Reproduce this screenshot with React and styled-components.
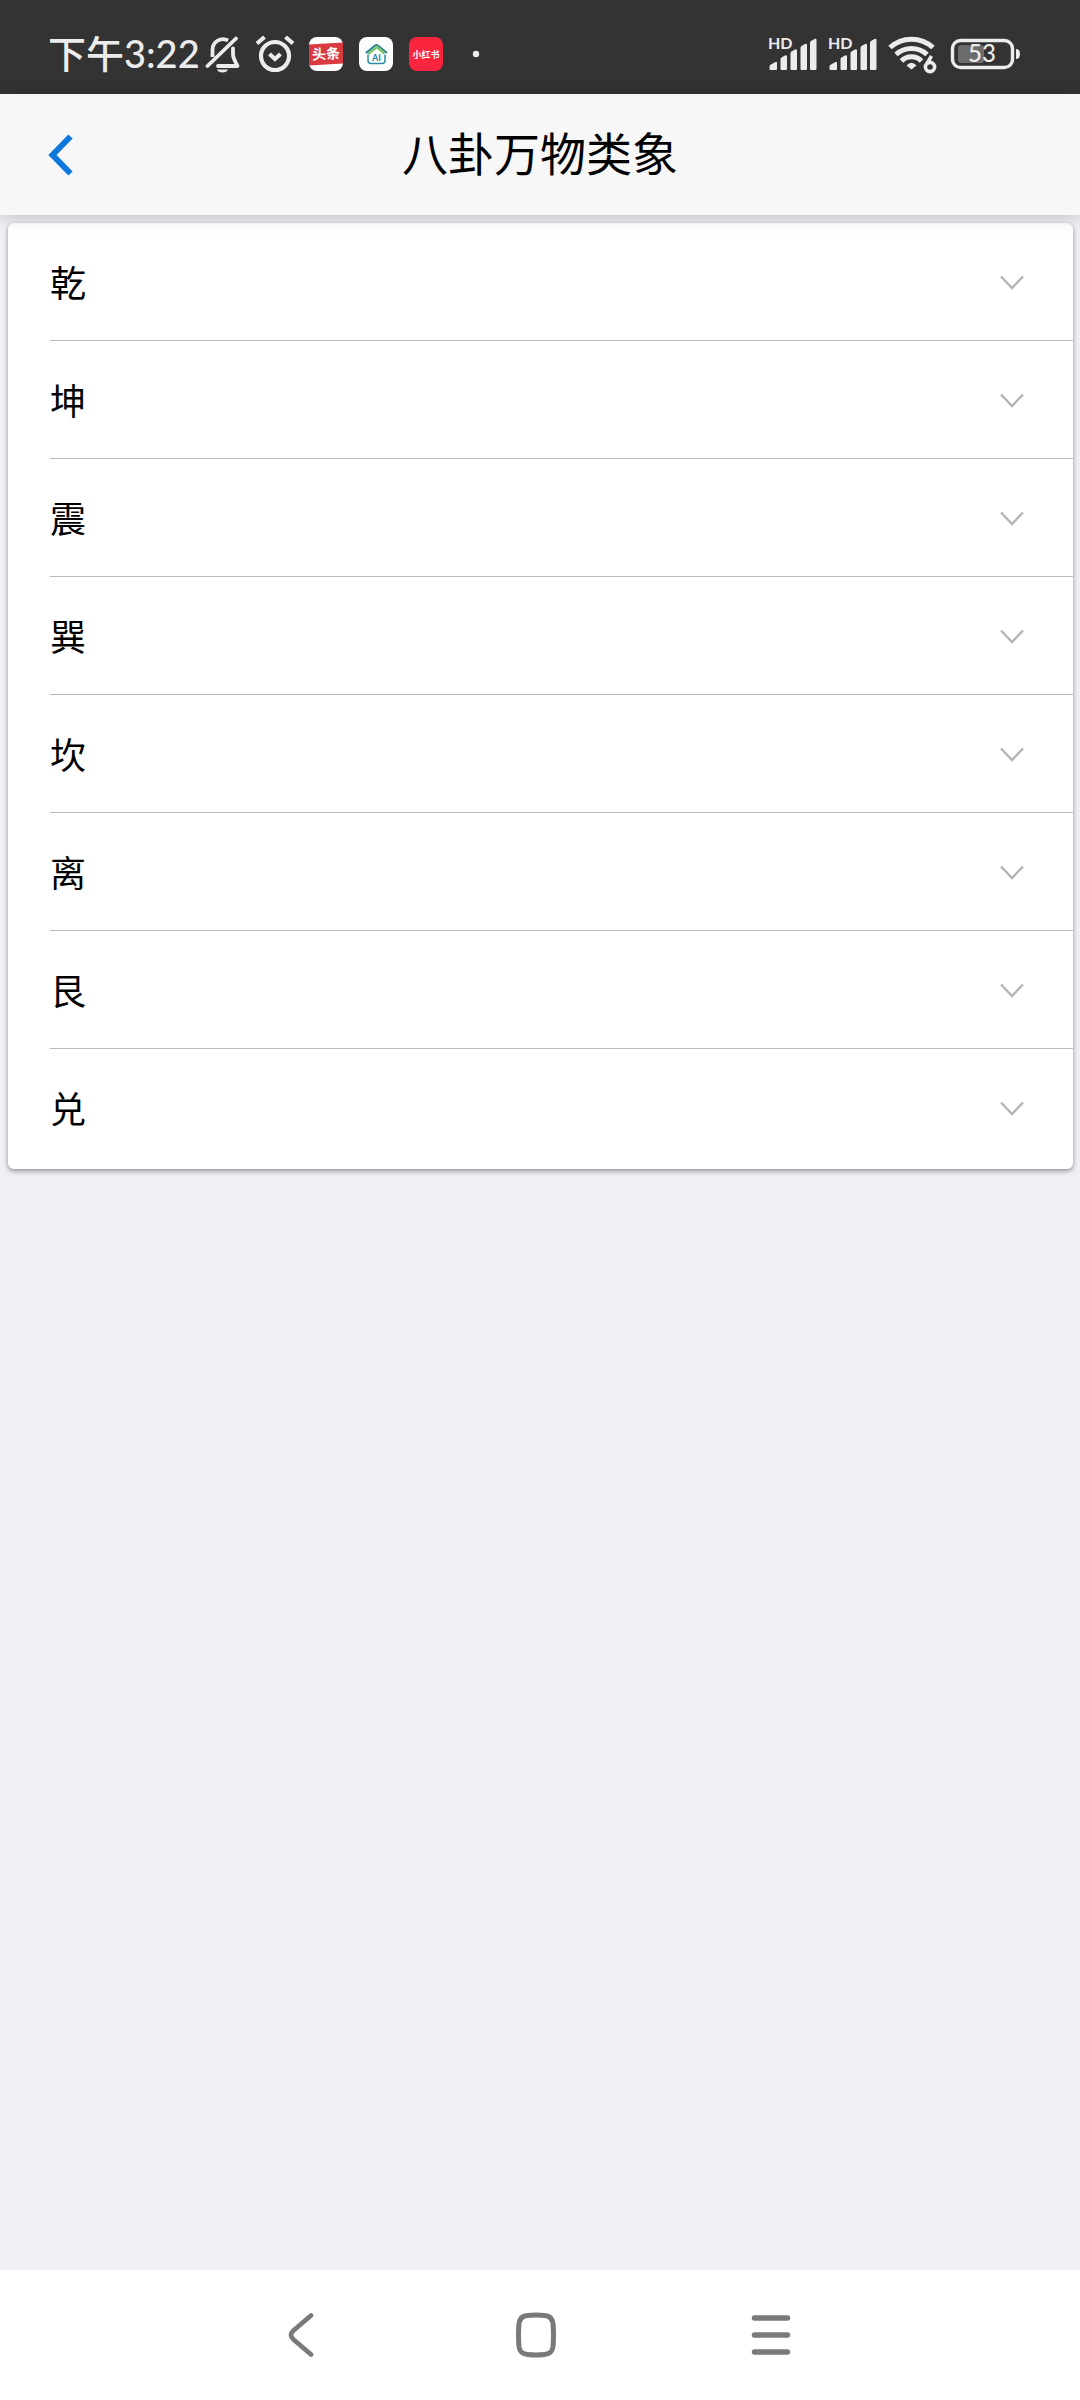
import React, { useState } from "react";
import styled, { createGlobalStyle } from "styled-components";

const colors = {
  status: "#333333",
  statusText: "#ececec",
  header: "#f7f7f7",
  page: "#efeff4",
  border: "#bababc",
  primary: "#0f78de",
  arrow: "#b4b4b4",
  nav: "#7a7a7a",
};

const trigrams = ["乾", "坤", "震", "巽", "坎", "离", "艮", "兑"];

const GlobalStyle = createGlobalStyle`
  * {
    box-sizing: border-box;
  }
  body {
    margin: 0;
    background: ${colors.page};
    font-family: "Noto Sans CJK SC", sans-serif;
    color: #000;
  }
  button {
    padding: 0;
    border: 0;
    background: none;
    color: inherit;
    font: inherit;
    cursor: pointer;
  }
  svg {
    display: block;
    flex: none;
  }
`;

const SPage = styled.div`
  min-height: 100vh;
  display: flex;
  flex-direction: column;
`;

const SStatusBar = styled.div`
  height: 94px;
  padding: 14px 60px 0 48px;
  display: flex;
  align-items: center;
  justify-content: space-between;
  background: ${colors.status};
  color: ${colors.statusText};
`;

const SStatusGroup = styled.div`
  display: flex;
  align-items: center;
  gap: ${(props) => props.$gap}px;
`;

const STime = styled.time`
  padding-bottom: 2px;
  font-family: Lato, "Noto Sans CJK SC", sans-serif;
  font-size: 38px;
  font-weight: 500;
  line-height: 44px;
  margin-right: -9px;
`;

const SHeader = styled.header`
  position: relative;
  z-index: 1;
  height: 121px;
  display: grid;
  grid-template-columns: 120px 1fr 120px;
  align-items: center;
  background: ${colors.header};
  box-shadow: 0 2px 16px rgba(0, 0, 0, 0.2);
`;

const SBackButton = styled.button`
  height: 100%;
  padding-left: 48px;
`;

const STitle = styled.h1`
  margin: 0;
  padding-bottom: 8px;
  text-align: center;
  font-size: 46px;
  font-weight: 400;
  line-height: 64px;
`;

const SContent = styled.main`
  flex: 1;
  padding: 8px 7px 8px 8px;
`;

const SCard = styled.ul`
  margin: 0;
  padding: 0 0 2px;
  list-style: none;
  background: #fff;
  border-radius: 6px;
  box-shadow: 0 2px 5px rgba(0, 0, 0, 0.4);
`;

const SItem = styled.li`
  padding-left: 42px;
`;

const SItemButton = styled.button`
  width: 100%;
  height: 118px;
  padding-right: 48px;
  display: flex;
  align-items: center;
  justify-content: space-between;
  border-bottom: ${(props) => (props.$last ? "0" : `1px solid ${colors.border}`)};
`;

const SName = styled.span`
  padding-bottom: 2px;
  font-size: 36px;
  line-height: 52px;
`;

const SArrow = styled.svg`
  transform: ${(props) => (props.$open ? "rotate(180deg)" : "none")};
`;

const SNavBar = styled.nav`
  height: 130px;
  padding: 0 191px 0 183px;
  display: flex;
  align-items: center;
  justify-content: space-between;
  background: #fff;
`;

const SNavButton = styled.button`
  width: 236px;
  height: 100%;
  display: flex;
  align-items: center;
  justify-content: center;
`;

const MutedIcon = () => (
  <svg width="36" height="38" viewBox="0 0 36 38" fill="none" stroke="currentColor" strokeWidth="3.8">
    <path d="M7.5 22V14.500a10.500 10.500 0 0 1 15.500-9" />
    <path d="M28 13.500v6c0 4 2.500 7 4.500 11.500H13" strokeLinejoin="round" strokeLinecap="round" />
    <path d="M2.500 31 31 3.500" strokeLinecap="round" />
    <path d="M12 34.500h11c-1 4-10 4-11 0Z" fill="currentColor" stroke="none" />
  </svg>
);

const AlarmIcon = () => (
  <svg width="40" height="38" viewBox="0 0 40 38" fill="none" stroke="currentColor" strokeWidth="4.2">
    <circle cx="20" cy="21" r="14" />
    <path d="m14.500 19 5.500 5 5.500-5" />
    <path d="M2 8.500 9.500 2M38 8.500 30.500 2" />
  </svg>
);

const ToutiaoIcon = () => (
  <svg width="34" height="34" viewBox="0 0 34 34">
    <rect width="34" height="34" rx="8" fill="#fff" />
    <path d="M0 7.500 34 5.500V26.500L0 28.500Z" fill="#d93a3f" />
    <text
      x="17"
      y="22"
      textAnchor="middle"
      fill="#fff"
      fontFamily="Noto Sans CJK SC"
      fontSize="14"
      fontWeight="700"
      transform="rotate(-3 17 17)"
    >
      头条
    </text>
  </svg>
);

const HouseIcon = () => (
  <svg width="34" height="34" viewBox="0 0 34 34" fill="none">
    <rect width="34" height="34" rx="8" fill="#fff" />
    <path d="M7 16 16 8.500q1.500-1 3 0L28 16" stroke="#2b7f9a" strokeWidth="2" />
    <path d="m9 17 9-7 7.500 6.500" stroke="#7fc36a" strokeWidth="2.6" />
    <path d="M9 17.500v6q0 3 3 3h11q3 0 3-3v-6" stroke="#2f8fa5" strokeWidth="1.500" />
    <text x="17.500" y="24" textAnchor="middle" fill="#25849c" fontSize="9" fontFamily="Lato" fontWeight="700">
      AI
    </text>
  </svg>
);

const RedBookIcon = () => (
  <svg width="34" height="34" viewBox="0 0 34 34">
    <rect width="34" height="34" rx="8" fill="#f9253f" />
    <text
      x="17"
      y="21"
      textAnchor="middle"
      fill="#fff"
      fontFamily="Noto Sans CJK SC"
      fontSize="9"
      fontWeight="700"
    >
      小红书
    </text>
  </svg>
);

const DotIcon = () => (
  <svg width="34" height="34" viewBox="0 0 34 34" fill="currentColor">
    <circle cx="17" cy="17" r="3.200" />
  </svg>
);

const SignalIcon = () => (
  <svg width="50" height="48" viewBox="0 -6 50 48" fill="currentColor">
    <text x="0" y="13" fontFamily="Lato" fontSize="16" fontWeight="700">
      HD
    </text>
    <path d="M1.500 33v-2.500q0-1.500 1.500-2l4-2.300q2-1 2 1V33q0 1-1 1h-5.500q-1 0-1-1Z" />
    <path d="M12.500 33V23.500q0-1.500 1-2l3.500-2q2-1 2 1V33q0 1-1 1h-4.500q-1 0-1-1Z" />
    <path d="M22.500 33V17.500q0-1.500 1-2l3.500-2q2-1 2 1V33q0 1-1 1h-4.500q-1 0-1-1Z" />
    <path d="M32.500 33V12q0-1.500 1-2l3.500-2q2-1 2 1V33q0 1-1 1h-4.500q-1 0-1-1Z" />
    <path d="M42 33V7q0-1.500 1-2l3.500-2q2-1 2 1V33q0 1-1 1H43q-1 0-1-1Z" />
  </svg>
);

const WifiIcon = () => (
  <svg width="52" height="40" viewBox="0 0 52 40" fill="none" stroke="currentColor" strokeWidth="5">
    <path d="M2 13.500a32 32 0 0 1 43 0" />
    <path d="M8 20.500a23 23 0 0 1 31 0" />
    <path d="M13.500 27a14 14 0 0 1 20 0" />
    <path d="m23.500 35.500-5-4q5-5.500 10 0Z" fill="currentColor" stroke="none" />
    <path d="M44.500 22 38.500 30" stroke={colors.status} strokeWidth="8" />
    <circle cx="42" cy="33" r="5.500" fill={colors.status} stroke={colors.status} strokeWidth="4" />
    <path d="m43.500 22-5 8.500" strokeWidth="3.600" />
    <circle cx="42" cy="33" r="4.600" strokeWidth="3.600" />
  </svg>
);

const BatteryIcon = () => (
  <svg width="70" height="32" viewBox="0 0 70 32" fill="none">
    <rect x="2.500" y="2.500" width="60" height="27" rx="8" stroke="currentColor" strokeWidth="3.4" />
    <rect x="8" y="7" width="26" height="18" rx="3" fill="#6c6c6c" />
    <path d="M66 11q4 0 4 5t-4 5Z" fill="currentColor" />
    <text
      x="32"
      y="24"
      textAnchor="middle"
      fill="currentColor"
      fontFamily="Lato"
      fontSize="24"
      fontWeight="500"
    >
      53
    </text>
  </svg>
);

const StatusBar = () => (
  <SStatusBar>
    <SStatusGroup $gap={14}>
      <STime>下午3:22</STime>
      <MutedIcon />
      <AlarmIcon />
      <SStatusGroup $gap={16}>
        <ToutiaoIcon />
        <HouseIcon />
        <RedBookIcon />
        <DotIcon />
      </SStatusGroup>
    </SStatusGroup>
    <SStatusGroup $gap={10}>
      <SignalIcon />
      <SignalIcon />
      <WifiIcon />
      <BatteryIcon />
    </SStatusGroup>
  </SStatusBar>
);

const Header = () => (
  <SHeader>
    <SBackButton aria-label="返回">
      <svg width="26" height="42" viewBox="0 0 26 42" fill="none" stroke={colors.primary} strokeWidth="6">
        <path d="M22.500 2.500 4.500 21l18 18.500" />
      </svg>
    </SBackButton>
    <STitle>八卦万物类象</STitle>
  </SHeader>
);

const NavBar = () => (
  <SNavBar>
    <SNavButton aria-label="返回">
      <svg width="26" height="46" viewBox="0 0 26 46" fill="none" stroke={colors.nav} strokeWidth="4.800" strokeLinecap="round">
        <path d="M23 3.500 5.500 18.500q-5 4.500 0 9L23 42.500" />
      </svg>
    </SNavButton>
    <SNavButton aria-label="主页">
      <svg width="42" height="46" viewBox="0 0 42 46" fill="none" stroke={colors.nav} strokeWidth="5">
        <path d="M12.500 3.500Q21 2.500 29.500 3.500Q37 4 38 11.500Q39 23 38 34.500Q37 42 29.500 42.500Q21 43.500 12.500 42.500Q5 42 4 34.500Q3 23 4 11.500Q5 4 12.500 3.500Z" />
      </svg>
    </SNavButton>
    <SNavButton aria-label="菜单">
      <svg width="40" height="46" viewBox="0 0 40 46" fill="none" stroke={colors.nav} strokeWidth="5.500" strokeLinecap="round">
        <path d="M3.500 6h33M3.500 23h33M3.500 40h33" />
      </svg>
    </SNavButton>
  </SNavBar>
);

export default function App() {
  const [opened, setOpened] = useState(null);

  return (
    <SPage>
      <GlobalStyle />
      <StatusBar />
      <Header />
      <SContent>
        <SCard>
          {trigrams.map((name, i) => (
            <SItem key={name}>
              <SItemButton
                $last={i === trigrams.length - 1}
                aria-expanded={opened === name}
                onClick={() => setOpened(opened === name ? null : name)}
              >
                <SName>{name}</SName>
                <SArrow
                  $open={opened === name}
                  width="26"
                  height="16"
                  viewBox="0 0 26 16"
                  fill="none"
                  stroke={colors.arrow}
                  strokeWidth="2.4"
                >
                  <path d="m2 2.500 11 11.500L24 2.500" />
                </SArrow>
              </SItemButton>
            </SItem>
          ))}
        </SCard>
      </SContent>
      <NavBar />
    </SPage>
  );
}
